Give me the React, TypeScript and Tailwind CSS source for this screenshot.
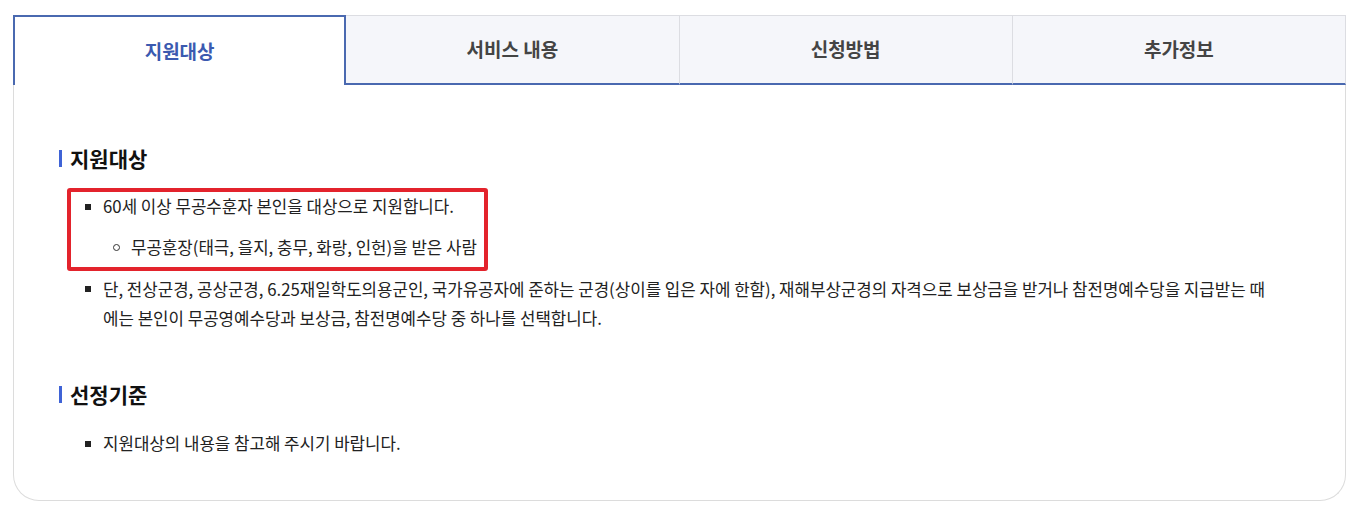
import React from "react";

const tabs = ["지원대상", "서비스 내용", "신청방법", "추가정보"];

const Square = () => (
    <span className="mt-[11px] h-[6px] w-[6px] shrink-0 bg-[#222]" />
);

const Circle = () => (
    <span className="mt-[10px] h-[7px] w-[7px] shrink-0 rounded-full border border-[#333]" />
);

const Heading = ({ children }: { children: React.ReactNode }) => (
    <h3 className="flex items-center gap-[8px] text-[21px] font-bold leading-[28px] text-[#111]">
        <span className="h-[17px] w-[3px] bg-[#3f63d6]" />
        {children}
    </h3>
);

export default function App() {
    const active = 0;

    return (
        <div
            className="min-h-[516px] bg-white pl-[13px] pr-[15px] pt-[15px]"
            style={{ fontFamily: '"Noto Sans CJK KR", "Noto Sans", sans-serif' }}
        >
            <div className="flex">
                {tabs.map((t, i) =>
                    i === active ? (
                        <div
                            key={t}
                            className="flex h-[70px] basis-1/4 items-center justify-center border-2 border-b-0 border-[#4a69b0] bg-white text-[19px] font-bold text-[#3b5ab0]"
                        >
                            {t}
                        </div>
                    ) : (
                        <div
                            key={t}
                            className="flex h-[70px] basis-1/4 items-center justify-center border-r border-t border-r-[#dcdde2] border-t-[#dcdde2] border-b-2 border-b-[#4a69b0] bg-[#f5f6fa] text-[19px] font-semibold text-[#444]"
                        >
                            {t}
                        </div>
                    )
                )}
            </div>

            <div className="rounded-b-[26px] border border-t-0 border-[#dcdcdc] px-[45px] pb-[44px] pt-[59px] text-[16.8px] text-[#222]">
                <Heading>지원대상</Heading>

                <ul className="relative mt-[21px] pl-[26px]">
                    {/* 강조 박스 */}
                    <div className="absolute left-[8px] top-[-5px] h-[83px] w-[421px] rounded-[3px] border-4 border-[#e3232c]" />
                    <li className="flex gap-[12px] leading-[26px]">
                        <Square />
                        <span>60세 이상 무공수훈자 본인을 대상으로 지원합니다.</span>
                    </li>
                    <li className="mt-[15px] flex gap-[11px] pl-[28px] leading-[26px]">
                        <Circle />
                        <span>무공훈장(태극, 을지, 충무, 화랑, 인헌)을 받은 사람</span>
                    </li>
                    <li className="mt-[15px] flex max-w-[1184px] gap-[12px] leading-[29px]">
                        <Square />
                        <span>
                            단, 전상군경, 공상군경, 6.25재일학도의용군인, 국가유공자에 준하는 군경(상이를 입은 자에 한함), 재해부상군경의 자격으로 보상금을 받거나 참전명예수당을 지급받는 때에는 본인이 무공영예수당과 보상금, 참전명예수당 중 하나를 선택합니다.
                        </span>
                    </li>
                </ul>

                <div className="mt-[47px]">
                    <Heading>선정기준</Heading>
                </div>

                <ul className="mt-[22px] pl-[26px]">
                    <li className="flex gap-[12px] leading-[26px]">
                        <Square />
                        <span>지원대상의 내용을 참고해 주시기 바랍니다.</span>
                    </li>
                </ul>
            </div>
        </div>
    );
}
